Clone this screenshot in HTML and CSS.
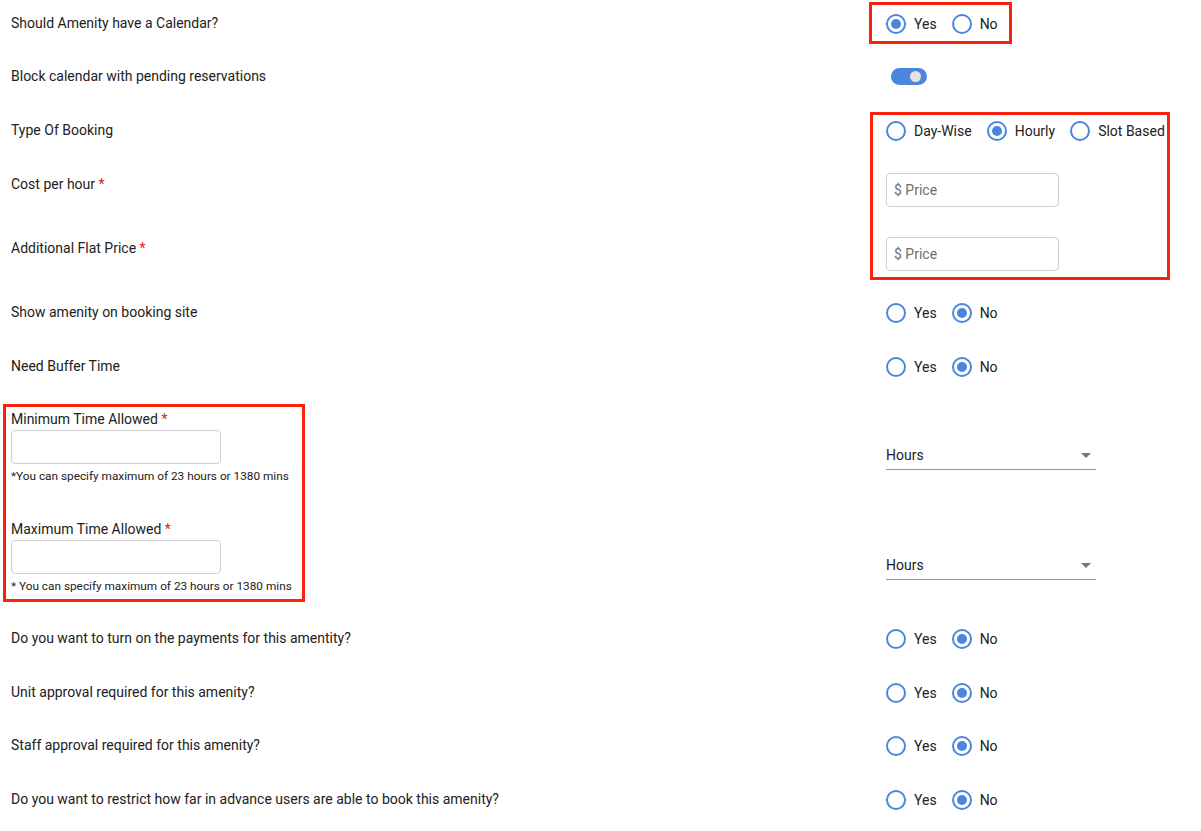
FILE: index.html
```html
<!DOCTYPE html>
<html lang="en">
<head>
    <meta charset="UTF-8">
    <meta name="viewport" content="width=device-width, initial-scale=1.0">
    <title>Amenity Settings</title>
    <link rel="stylesheet" href="styles.css">
</head>
<body>
    <div class="form">

        <div class="row short">
            <div class="label">Should Amenity have a Calendar?</div>
            <div class="control">
                <div class="radios">
                    <label class="radio"><span class="dot checked"></span>Yes</label>
                    <label class="radio"><span class="dot"></span>No</label>
                </div>
                <span class="mark mark-calendar"></span>
            </div>
        </div>

        <div class="row">
            <div class="label">Block calendar with pending reservations</div>
            <div class="control">
                <span class="toggle"><span class="knob"></span></span>
            </div>
        </div>

        <div class="row">
            <div class="label">Type Of Booking</div>
            <div class="control">
                <div class="radios">
                    <label class="radio"><span class="dot"></span>Day-Wise</label>
                    <label class="radio"><span class="dot checked"></span>Hourly</label>
                    <label class="radio"><span class="dot"></span>Slot Based</label>
                </div>
                <span class="mark mark-booking"></span>
            </div>
        </div>

        <div class="row tall">
            <div class="label">Cost per hour <span class="req">*</span></div>
            <div class="control">
                <input type="text" class="price-box" placeholder="$ Price">
            </div>
        </div>

        <div class="row tall">
            <div class="label">Additional Flat Price <span class="req">*</span></div>
            <div class="control">
                <input type="text" class="price-box" placeholder="$ Price">
            </div>
        </div>

        <div class="row">
            <div class="label">Show amenity on booking site</div>
            <div class="control">
                <div class="radios">
                    <label class="radio"><span class="dot"></span>Yes</label>
                    <label class="radio"><span class="dot checked"></span>No</label>
                </div>
            </div>
        </div>

        <div class="row short">
            <div class="label">Need Buffer Time</div>
            <div class="control">
                <div class="radios">
                    <label class="radio"><span class="dot"></span>Yes</label>
                    <label class="radio"><span class="dot checked"></span>No</label>
                </div>
            </div>
        </div>

        <div class="row time-min">
            <div class="label">
                <div>Minimum Time Allowed <span class="req">*</span></div>
                <input type="text" class="time-box">
                <div class="hint">*You can specify maximum of 23 hours or 1380 mins</div>
                <span class="mark mark-time"></span>
            </div>
            <div class="control">
                <div class="select">Hours<span class="caret"></span></div>
            </div>
        </div>

        <div class="row time-max">
            <div class="label">
                <div>Maximum Time Allowed <span class="req">*</span></div>
                <input type="text" class="time-box">
                <div class="hint">* You can specify maximum of 23 hours or 1380 mins</div>
            </div>
            <div class="control">
                <div class="select">Hours<span class="caret"></span></div>
            </div>
        </div>

        <div class="row">
            <div class="label">Do you want to turn on the payments for this amentity?</div>
            <div class="control">
                <div class="radios">
                    <label class="radio"><span class="dot"></span>Yes</label>
                    <label class="radio"><span class="dot checked"></span>No</label>
                </div>
            </div>
        </div>

        <div class="row short">
            <div class="label">Unit approval required for this amenity?</div>
            <div class="control">
                <div class="radios">
                    <label class="radio"><span class="dot"></span>Yes</label>
                    <label class="radio"><span class="dot checked"></span>No</label>
                </div>
            </div>
        </div>

        <div class="row">
            <div class="label">Staff approval required for this amenity?</div>
            <div class="control">
                <div class="radios">
                    <label class="radio"><span class="dot"></span>Yes</label>
                    <label class="radio"><span class="dot checked"></span>No</label>
                </div>
            </div>
        </div>

        <div class="row">
            <div class="label">Do you want to restrict how far in advance users are able to book this amenity?</div>
            <div class="control">
                <div class="radios">
                    <label class="radio"><span class="dot"></span>Yes</label>
                    <label class="radio"><span class="dot checked"></span>No</label>
                </div>
            </div>
        </div>

    </div>
</body>
</html>
```

FILE: styles.css
```css
body {
    margin: 0;
    font-family: Roboto, "Liberation Sans", Arial, sans-serif;
    font-size: 14px;
    color: #212121;
    background: #fff;
}
.form {
    padding: 13px 0 0 11px;
}
.row {
    display: grid;
    grid-template-columns: 875px 1fr;
    align-items: start;
    height: 54px;
    line-height: 20px;
}
.row.short {
    height: 53px;
}
.row.tall {
    height: 64px;
}
.row.time-min {
    height: 110px;
}
.row.time-max {
    height: 109px;
}
.label, .control {
    position: relative;
}
.control {
    display: flex;
    align-items: center;
    min-height: 20px;
}
.req {
    color: #e01b1b;
}

/* radio buttons */
.radios {
    display: flex;
    gap: 15px;
    margin-top: 1px;
}
.radio {
    display: flex;
    align-items: center;
    gap: 8px;
    cursor: pointer;
}
.dot {
    position: relative;
    box-sizing: border-box;
    width: 20px;
    height: 20px;
    border: 2px solid #4a86db;
    border-radius: 50%;
}
.dot.checked::after {
    content: "";
    position: absolute;
    left: 3px;
    top: 3px;
    width: 10px;
    height: 10px;
    border-radius: 50%;
    background: #4a86db;
}

/* toggle */
.toggle {
    position: relative;
    display: block;
    width: 36px;
    height: 17px;
    margin-left: 5px;
    border-radius: 9px;
    background: #4a86db;
}
.knob {
    position: absolute;
    right: 6px;
    top: 3px;
    width: 11px;
    height: 11px;
    border-radius: 50%;
    background: #e2e2e2;
}

/* inputs */
.price-box {
    box-sizing: border-box;
    width: 173px;
    height: 34px;
    margin-top: -1px;
    padding: 0 7px;
    border: 1px solid #cfcfcf;
    border-radius: 4px;
    font-family: inherit;
    font-size: 14px;
}
.price-box::placeholder {
    color: #6f6f6f;
}
.time-box {
    display: block;
    box-sizing: border-box;
    width: 210px;
    height: 34px;
    margin-top: 1px;
    border: 1px solid #cfcfcf;
    border-radius: 4px;
}
.hint {
    margin-top: 5px;
    font-size: 11.8px;
    line-height: 14px;
}
.select {
    position: relative;
    box-sizing: border-box;
    width: 210px;
    height: 25px;
    margin-top: 36px;
    border-bottom: 1px solid #949494;
}
.caret {
    position: absolute;
    right: 5px;
    top: 8px;
    width: 0;
    height: 0;
    border-left: 5px solid transparent;
    border-right: 5px solid transparent;
    border-top: 5px solid #757575;
}

/* red annotation boxes */
.mark {
    position: absolute;
    box-sizing: border-box;
    border: 3px solid #f8220d;
    z-index: 2;
    pointer-events: none;
}
.mark-calendar {
    top: -11px;
    left: -17px;
    width: 143px;
    height: 42px;
}
.mark-booking {
    top: -8px;
    left: -16px;
    width: 300px;
    height: 168px;
}
.mark-time {
    top: -5px;
    left: -8px;
    width: 302px;
    height: 198px;
}
```
